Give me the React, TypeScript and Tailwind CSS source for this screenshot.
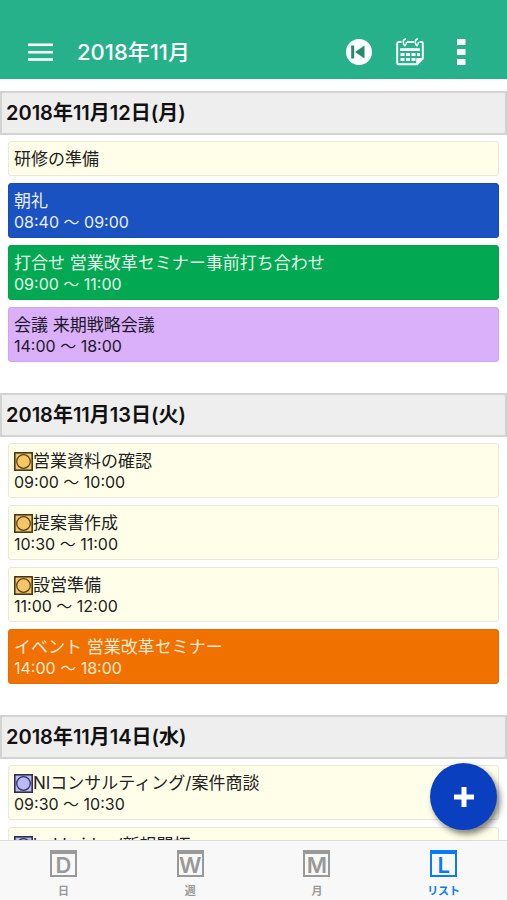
import type { ReactNode } from 'react'
import clsx from 'clsx'

type Tone = 'cream' | 'blue' | 'green' | 'purple' | 'orange'
type Mark = 'amber' | 'indigo'

interface ScheduleItem {
  title: string
  time?: string
  tone?: Tone
  mark?: Mark
}

interface ScheduleDay {
  date: string
  items: ScheduleItem[]
}

const days: ScheduleDay[] = [
  {
    date: '2018年11月12日(月)',
    items: [
      { title: '研修の準備' },
      { title: '朝礼', time: '08:40 〜 09:00', tone: 'blue' },
      { title: '打合せ 営業改革セミナー事前打ち合わせ', time: '09:00 〜 11:00', tone: 'green' },
      { title: '会議 来期戦略会議', time: '14:00 〜 18:00', tone: 'purple' },
    ],
  },
  {
    date: '2018年11月13日(火)',
    items: [
      { title: '営業資料の確認', time: '09:00 〜 10:00', mark: 'amber' },
      { title: '提案書作成', time: '10:30 〜 11:00', mark: 'amber' },
      { title: '設営準備', time: '11:00 〜 12:00', mark: 'amber' },
      { title: 'イベント 営業改革セミナー', time: '14:00 〜 18:00', tone: 'orange' },
    ],
  },
  {
    date: '2018年11月14日(水)',
    items: [
      { title: 'NIコンサルティング/案件商談', time: '09:30 〜 10:30', mark: 'indigo' },
      { title: 'hokkaidoo/新規開拓', mark: 'indigo' },
    ],
  },
]

const tabs = [
  { letter: 'D', label: '日' },
  { letter: 'W', label: '週' },
  { letter: 'M', label: '月' },
  { letter: 'L', label: 'リスト', active: true },
]

const toneClasses: Record<Tone, string> = {
  cream: 'border-[#e8e8dc] bg-[#ffffe9] text-[#222]',
  blue: 'border-[#164cb4] bg-[#1a53c1] text-[#e8eefb]',
  green: 'border-[#04a04c] bg-[#03a852] text-[#e2f8ea]',
  purple: 'border-[#cfa5ec] bg-[#d9b0f9] text-[#22182b]',
  orange: 'border-[#e46c02] bg-[#f07000] text-[#ffe9d2]',
}

function MarkIcon({ mark }: { mark: Mark }) {
  return (
    <svg viewBox="0 0 19 19" className="size-[19px] shrink-0" aria-hidden="true">
      <rect
        x="0.8"
        y="0.8"
        width="17.4"
        height="17.4"
        fill={mark === 'amber' ? '#f6c566' : '#b9bbf6'}
        stroke={mark === 'amber' ? '#3a2f16' : '#25253f'}
        strokeWidth="1.5"
      />
      <circle
        cx="9.5"
        cy="9.5"
        r="6.8"
        fill="none"
        stroke={mark === 'amber' ? '#5a4519' : '#33335c'}
        strokeWidth="1.3"
      />
    </svg>
  )
}

function EventCard({ item }: { item: ScheduleItem }) {
  return (
    <li
      className={clsx(
        'rounded-[3px] border px-[5px] pt-[6px] pb-[5px]',
        toneClasses[item.tone ?? 'cream'],
      )}
    >
      <div className="flex h-[22px] items-center text-[17px] leading-[22px] whitespace-nowrap">
        {item.mark && <MarkIcon mark={item.mark} />}
        <span>{item.title}</span>
      </div>
      {item.time && <div className="h-5 text-base leading-5">{item.time}</div>}
    </li>
  )
}

function IconButton({ label, children }: { label: string; children: ReactNode }) {
  return (
    <button type="button" aria-label={label} className="flex size-7 items-center justify-center">
      {children}
    </button>
  )
}

function TopBar() {
  return (
    <header className="flex shrink-0 items-center bg-[#26b18a] pt-[38px] pr-8 pb-[13px] pl-[27px] text-white">
      <IconButton label="メニュー">
        <svg viewBox="0 0 28 28" className="size-7" fill="currentColor" aria-hidden="true">
          <rect x="1" y="5.5" width="25" height="2.6" />
          <rect x="1" y="12.9" width="25" height="2.6" />
          <rect x="1" y="20.2" width="25" height="2.6" />
        </svg>
      </IconButton>
      <h1 className="ml-[22px] flex-1 text-[22px] leading-7 font-medium">2018年11月</h1>
      <div className="flex gap-[23px]">
        <IconButton label="今日へ戻る">
          <svg viewBox="0 0 28 28" className="size-7" aria-hidden="true">
            <circle cx="14" cy="14" r="13" fill="#fff" />
            <rect x="6.2" y="7.5" width="3" height="13" fill="#26896d" />
            <path d="M19.5 7.5v13L10 14z" fill="#26896d" />
          </svg>
        </IconButton>
        <IconButton label="カレンダー">
          <svg viewBox="0 0 28 28" className="size-7" fill="none" stroke="#fff" aria-hidden="true">
            <path
              d="M5.500 4H2.500Q1.200 4 1.200 5.300V25q0 1.300 1.300 1.300h18.700l5.600-5.600V5.300Q26.800 4 25.500 4h-2M11 4h7"
              strokeWidth="1.900"
            />
            <path
              d="M10 .8Q7.200 1.500 7.200 4T9 7.800Q10.800 6.500 10.300 4M22 .8Q19.200 1.500 19.200 4T21 7.800Q22.800 6.500 22.300 4"
              strokeWidth="1.500"
            />
            <path d="M4.200 11.600h19.600" strokeWidth="2.800" />
            <path
              d="M4.500 16.500h4M10 16.500h4M15.500 16.500h4M21 16.500h3M4.500 21.500h4M10 21.500h4M15.500 21.500h4"
              strokeWidth="3"
            />
            <path d="M20.800 26.300v-5.800h6z" fill="#fff" />
          </svg>
        </IconButton>
        <IconButton label="その他">
          <svg viewBox="0 0 28 28" className="size-7" fill="currentColor" aria-hidden="true">
            <rect x="10" y="1" width="8.5" height="6" />
            <rect x="10" y="11" width="8.5" height="6" />
            <rect x="10" y="21" width="8.5" height="6" />
          </svg>
        </IconButton>
      </div>
    </header>
  )
}

function DaySection({ day }: { day: ScheduleDay }) {
  return (
    <section>
      <h2 className="border-2 border-[#d3d3d3] bg-[#eee] px-1 text-xl leading-10 font-semibold text-[#111]">
        {day.date}
      </h2>
      <ul className="flex flex-col gap-[7px] px-2 pt-1.5">
        {day.items.map((item) => (
          <EventCard key={item.title} item={item} />
        ))}
      </ul>
    </section>
  )
}

function TabBar() {
  return (
    <nav className="grid shrink-0 grid-cols-4 border-t border-[#dcdcdc] bg-[#f8f8f8]">
      {tabs.map((tab) => (
        <button
          key={tab.label}
          type="button"
          aria-current={tab.active ? 'page' : undefined}
          className={clsx(
            'flex flex-col items-center gap-1.5 pt-[9px] pb-px',
            tab.active ? 'text-[#087cf5]' : 'text-[#999]',
          )}
        >
          <span className="flex size-[27px] items-center justify-center border-2 border-t-4 border-current text-[22px] leading-5 font-semibold">
            {tab.letter}
          </span>
          <span className="text-[11px] leading-4 font-bold">{tab.label}</span>
        </button>
      ))}
    </nav>
  )
}

export default function App() {
  return (
    <div className="flex h-screen flex-col bg-white font-['Inter','Noto_Sans_CJK_JP',sans-serif]">
      <TopBar />
      <div className="relative flex min-h-0 flex-1 flex-col">
        <main className="flex min-h-0 flex-1 flex-col gap-[31px] overflow-hidden pt-3">
          {days.map((day) => (
            <DaySection key={day.date} day={day} />
          ))}
        </main>
        <button
          type="button"
          aria-label="予定を追加"
          className="absolute right-2.5 bottom-2.5 flex size-[67px] items-center justify-center rounded-full bg-[#0a3fc0] text-white shadow-[3px_4px_6px_rgba(0,0,0,0.5)]"
        >
          <svg viewBox="0 0 20 20" className="size-5" fill="currentColor" aria-hidden="true">
            <path d="M7.5 0h5v7.500H20v5h-7.500V20h-5v-7.500H0v-5h7.500z" />
          </svg>
        </button>
      </div>
      <TabBar />
    </div>
  )
}
